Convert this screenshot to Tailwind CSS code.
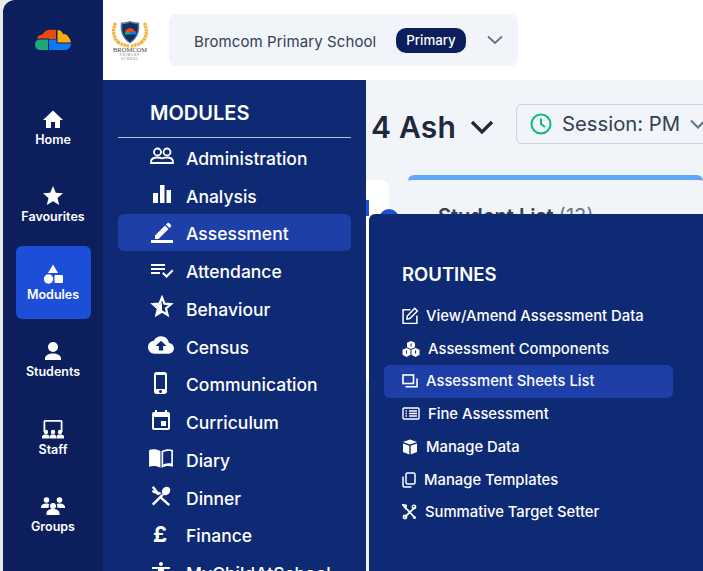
<!DOCTYPE html>
<html lang="en">
<head>
  <meta charset="UTF-8" />
  <title>Bromcom - Modules</title>
  <script src="https://cdn.jsdelivr.net/npm/@tailwindcss/browser@4"></script>
</head>
<body class="bg-[#e8eaee] font-['Inter',sans-serif] overflow-hidden">
<div class="flex w-[703px] h-[571px] overflow-hidden pl-[3px]">

  <!-- Left rail -->
  <aside class="w-[100px] shrink-0 bg-[#0c1f5c] rounded-tl-xl flex flex-col items-center text-white text-[12.5px] font-semibold">
    <div class="h-20 flex items-center justify-center w-full">
      <svg class="w-9 h-[22px]" viewBox="0 0 36 22">
        <path d="M0 15.500C0 12.500 2 10.500 5 10.500H13V21H5C2 21 0 18.500 0 15.500Z" fill="#1fa67a"/>
        <path d="M2 9.500C3 6.500 5.500 5.500 7.500 5.500C9 2.500 12 .8 15.500 .8H21V10H14V9.500Z" fill="#ea4a0c"/>
        <path d="M14 10.500H21.500V14.500H27.500V21H14Z M22 14.500H36C36 18.500 33.500 21 30 21H27.500V14.500Z" fill="#0b7cf2"/>
        <path d="M22.500 1C25.500 1 27.500 3 28 5C31 4.700 33 6.500 34.500 9.500C35.500 11 35.800 12.500 35.800 13.500H22.500Z" fill="#fbab05"/>
      </svg>
    </div>
    <nav class="w-full flex flex-col items-center pt-[10px]">
      <a class="h-[77.500px] w-full flex flex-col items-center justify-center">
        <svg class="w-6 h-6" viewBox="0 0 24 24" fill="currentColor"><path d="M10 21v-6h4v6h5v-8h3L12 3.500 2 13h3v8z"/></svg>
        <span>Home</span>
      </a>
      <a class="h-[76.500px] w-full flex flex-col items-center justify-center">
        <svg class="w-6 h-6" viewBox="0 0 24 24" fill="currentColor"><path d="M12 17.270L18.180 21l-1.640-7.030L22 9.240l-7.190-.61L12 2 9.190 8.630 2 9.240l5.460 4.730L5.820 21z"/></svg>
        <span>Favourites</span>
      </a>
      <a class="h-[73px] mt-[2px] mb-[3px] w-[75px] bg-[#1d4ed8] rounded-md flex flex-col items-center justify-center pt-[1px]">
        <svg class="w-6 h-6" viewBox="0 0 24 24" fill="currentColor"><path d="M12 2.500l5 8.500H7z"/><circle cx="7.500" cy="17" r="4.700"/><rect x="13.500" y="13" width="8.500" height="8" rx="1"/></svg>
        <span>Modules</span>
      </a>
      <a class="h-[77.500px] w-full flex flex-col items-center justify-center">
        <svg class="w-6 h-6" viewBox="0 0 24 24" fill="currentColor"><circle cx="12" cy="8" r="5"/><path d="M4 21v-1.500C4 16 8 14.500 12 14.500s8 1.500 8 5V21z"/></svg>
        <span>Students</span>
      </a>
      <a class="h-[77.500px] w-full flex flex-col items-center justify-center">
        <svg class="w-6 h-6" viewBox="0 0 24 24" fill="currentColor"><path d="M2.500 15V4.500A1.500 1.500 0 0 1 4 3h16a1.500 1.500 0 0 1 1.500 1.500V15h-1.800V4.800H4.300V15z"/><circle cx="5" cy="15" r="2.200"/><circle cx="12" cy="15" r="2.200"/><circle cx="19" cy="15" r="2.200"/><path d="M1 21.500v-2C1 18 3 17.500 5 17.500s3 .5 3.300 2v2zM8.700 21.500v-2c.3-1.500 1.300-2 3.300-2s3 .5 3.300 2v2zM15.700 21.500v-2c.3-1.500 1.300-2 3.300-2s4 .5 4 2v2z"/></svg>
        <span>Staff</span>
      </a>
      <a class="h-[77.500px] w-full flex flex-col items-center justify-center">
        <svg class="w-6 h-6" viewBox="0 0 24 24" fill="currentColor"><circle cx="5.500" cy="6" r="2.800"/><circle cx="18.500" cy="6" r="2.800"/><circle cx="12" cy="12" r="3"/><path d="M0 14v-1c0-2 2.500-3.500 5.500-3.500 1.500 0 2.300.3 2.800.7C7.700 11 7.500 12 8 13.500 6 14 4.500 14 4 14zM24 14v-1c0-2-2.500-3.500-5.500-3.500-1.500 0-2.300.3-2.800.7.600.8.800 1.800.3 3.300 2 .5 3.500.5 4 .5zM5.500 21v-2c0-2.500 3-4 6.500-4s6.500 1.500 6.500 4v2z"/></svg>
        <span>Groups</span>
      </a>
    </nav>
  </aside>

  <div class="flex-1 flex flex-col min-w-0">
    <!-- Header -->
    <header class="h-20 shrink-0 bg-white flex items-center pl-[9px]">
      <svg class="w-9 h-10 shrink-0 mt-[1px]" viewBox="0 0 36 40">
        <path d="M3.500 2c-3 7-2.500 14 2.500 19M32.500 2c3 7 2.500 14-2.500 19M6 21c3 2.500 7 3.500 11 4M30 21c-3 2.500-7 3.500-11 4" fill="none" stroke="#f2b33d" stroke-width="3.400" stroke-dasharray="2.500 .6"/>
        <path d="M18 0c3 1.500 7 1.500 9 1.500 1 7 0 15-9 21C9 16.500 8 8.500 9 1.500c2 0 6 0 9-1.500z" fill="#5a7394"/>
        <path d="M18 1.500c3 1 5 1.500 7.500 1.500.8 6-.5 13-7.500 18C11 16 9.700 9 10.500 3c2.500 0 4.500-.5 7.500-1.500z" fill="#12305e"/>
        <path d="M13 11c1-3 3-4 5-4s3 1 4 2l2 2v2H13z" fill="#ea4a0c"/>
        <rect x="13" y="11" width="5" height="2.500" fill="#1fa67a"/><rect x="18" y="11" width="6" height="2.500" fill="#0b7cf2"/>
        <text x="18" y="30.500" text-anchor="middle" font-family="Liberation Serif" font-size="6.500" fill="#444">BROMCOM</text>
        <text x="18" y="35" text-anchor="middle" font-family="Liberation Serif" font-size="3" letter-spacing="1" fill="#666">PRIMARY</text>
        <text x="18" y="39" text-anchor="middle" font-family="Liberation Serif" font-size="3" letter-spacing="1" fill="#666">SCHOOL</text>
      </svg>
      <div class="ml-[21px] w-[349px] h-[52px] bg-[#f1f4f9] rounded-lg flex items-center pl-[25px] text-[#334155]">
        <span class="text-[15px] tracking-[.1px] mt-[5px] w-[202px]">Bromcom Primary School</span>
        <span class="w-[70px] h-[25px] rounded-[10px] bg-[#0c1f5c] text-white text-[13.300px] font-medium flex items-center justify-center mt-[1px]">Primary</span>
        <svg class="w-[18px] h-[18px] ml-[20px] text-[#64748b]" viewBox="0 0 18 18" fill="none" stroke="currentColor" stroke-width="1.800"><path d="M2 5.500L9 12l7-6.500"/></svg>
      </div>
    </header>

    <div class="flex-1 flex min-h-0">
      <!-- Modules menu -->
      <section class="w-[263px] shrink-0 bg-[#0f2a75] text-white overflow-hidden">
        <h2 class="h-[57px] pl-[47px] pt-[20px] text-[20px] leading-[26px] font-semibold">MODULES</h2>
        <div class="mx-[15px] w-[233px] border-t border-white/70"></div>
        <ul class="px-[15px] text-[17.500px] leading-[24px] font-medium">
          <li class="h-[37.750px] pt-[4px] flex items-center">
            <span class="w-[68px] pl-[32px]"><svg class="w-[24px] h-[24px] -mt-[5px]" viewBox="0 0 24 24" fill="none" stroke="currentColor" stroke-width="1.800"><circle cx="7.500" cy="8" r="3.500"/><circle cx="17" cy="8" r="3.500"/><path d="M1 19v-1c0-3 3-4.500 6.500-4.500 2 0 3.500.4 4.500 1 1-.6 2.500-1 5-1 3.500 0 6 1.500 6 4.500v1z"/></svg></span>
            Administration
          </li>
          <li class="h-[37.750px] pt-[4px] flex items-center">
            <span class="w-[68px] pl-[32px]"><svg class="w-[24px] h-[24px] -mt-[5px]" viewBox="0 0 24 24" fill="currentColor"><rect x="3" y="11" width="5" height="10"/><rect x="10" y="3" width="4.500" height="18"/><rect x="16.500" y="8" width="4.500" height="13"/></svg></span>
            Analysis
          </li>
          <li class="h-[37.750px] pt-[4px] flex items-center bg-[#1f3fa8] rounded-md">
            <span class="w-[68px] pl-[32px]"><svg class="w-[24px] h-[24px] -mt-[5px]" viewBox="0 0 24 24" fill="currentColor"><path d="M5 15.500V19h3.500L18.500 9 15 5.500zM21 6.500c.4-.4.4-1 0-1.400l-2.100-2.100c-.4-.4-1-.4-1.400 0L16 4.500 19.500 8z"/><rect x="1" y="20" width="22" height="3"/></svg></span>
            Assessment
          </li>
          <li class="h-[37.750px] pt-[4px] flex items-center">
            <span class="w-[68px] pl-[32px]"><svg class="w-[24px] h-[24px] -mt-[5px]" viewBox="0 0 24 24" fill="currentColor"><path d="M15 10H1v2h14zM15 6H1v2h14zM1 16h9v-2H1zM22 11.500l1.500 1.500-7 7-4.500-4.500L13.500 14l3 3z"/></svg></span>
            Attendance
          </li>
          <li class="h-[37.750px] pt-[4px] flex items-center">
            <span class="w-[68px] pl-[32px]"><svg class="w-[24px] h-[24px] -mt-[5px]" viewBox="0 0 24 24" fill="none" stroke="currentColor" stroke-width="2.200"><path d="M12 2.500l2.500 6.200 6.500.4-5 4.300 1.600 6.600L12 16.500 6.400 20 8 13.400 3 9.100l6.500-.4z"/><path d="M12 7v9L7.500 18.500 9 13l-3-3 4.500-.5z" fill="currentColor" stroke="none"/></svg></span>
            Behaviour
          </li>
          <li class="h-[37.750px] pt-[4px] flex items-center">
            <span class="w-[68px] pl-[30px]"><svg class="w-[26px] h-[26px] -mt-[6px]" viewBox="0 0 24 24" fill="currentColor"><path d="M19.350 10.040C18.670 6.590 15.640 4 12 4 9.110 4 6.600 5.640 5.350 8.040 2.340 8.360 0 10.910 0 14c0 3.310 2.690 6 6 6h13c2.760 0 5-2.240 5-5 0-2.640-2.050-4.780-4.650-4.960zM14 13v4h-4v-4H7l5-5 5 5h-3z"/></svg></span>
            Census
          </li>
          <li class="h-[37.750px] pt-[4px] flex items-center">
            <span class="w-[68px] pl-[31px]"><svg class="w-[24px] h-[24px] -mt-[5px]" viewBox="0 0 24 24" fill="currentColor"><path d="M15.500 1h-8C6.120 1 5 2.120 5 3.500v17C5 21.880 6.120 23 7.500 23h8c1.380 0 2.500-1.120 2.500-2.500v-17C18 2.120 16.880 1 15.500 1zm-4 21c-.83 0-1.500-.67-1.500-1.500s.67-1.500 1.500-1.500 1.500.67 1.500 1.500-.67 1.500-1.500 1.500zm4.500-4H7V4h9v14z"/></svg></span>
            Communication
          </li>
          <li class="h-[37.750px] pt-[4px] flex items-center">
            <span class="w-[68px] pl-[31px]"><svg class="w-[24px] h-[24px] -mt-[5px]" viewBox="0 0 24 24" fill="currentColor"><path d="M17 12h-5v5h5v-5zM16 1v2H8V1H6v2H5c-1.110 0-1.990.9-1.990 2L3 19c0 1.100.89 2 2 2h14c1.100 0 2-.9 2-2V5c0-1.100-.9-2-2-2h-1V1h-2zm3 18H5V8h14v11z"/></svg></span>
            Curriculum
          </li>
          <li class="h-[37.750px] pt-[4px] flex items-center">
            <span class="w-[68px] pl-[30px]"><svg class="w-[26px] h-[26px] -mt-[6px]" viewBox="0 0 24 24" fill="currentColor"><path d="M1 4.500C4 3.500 8 3.500 11.500 5.500V21C8 19 4 19 1 20z"/><path d="M12.500 5.500C16 3.500 20 3.500 23 4.500V20C20 19 16 19 12.500 21zM14 6.500v11.500c2.500-1 5-1.300 7.500-.9V5.800C19 5.300 16.500 5.500 14 6.500z" fill-rule="evenodd"/></svg></span>
            Diary
          </li>
          <li class="h-[37.750px] pt-[4px] flex items-center">
            <span class="w-[68px] pl-[32px]"><svg class="w-[22px] h-[22px] -mt-[6px]" viewBox="0 0 24 24" fill="none" stroke="currentColor" stroke-width="2.600"><path d="M3 21.500L14 10.500"/><path d="M3 2l6 7.500 2.500-1M2.500 6.500L9 9.500M11 13l10 9"/><ellipse cx="17.500" cy="6.500" rx="4.200" ry="5" transform="rotate(45 17.500 6.500)" fill="currentColor" stroke="none"/></svg></span>
            Dinner
          </li>
          <li class="h-[37.750px] pt-[4px] flex items-center">
            <span class="w-[68px] pl-[35px] text-[22px] font-bold leading-none -mt-[4px]">£</span>
            Finance
          </li>
          <li class="h-[37.750px] pt-[4px] flex items-center">
            <span class="w-[68px] pl-[31px]"><svg class="w-[24px] h-[24px] -mt-[5px]" viewBox="0 0 24 24" fill="currentColor"><path d="M12 2c1.100 0 2 .9 2 2s-.9 2-2 2-2-.9-2-2 .9-2 2-2zm9 7h-6v13h-2v-6h-2v6H9V9H3V7h18v2z"/></svg></span>
            MyChildAtSchool
          </li>
        </ul>
      </section>

      <!-- Page behind the menus -->
      <main class="relative flex-1 bg-[#f1f4f9] min-w-0 overflow-hidden">
        <div class="flex items-center h-[94px] pl-[5px] text-[#1e293b]">
          <h1 class="text-[30px] font-semibold tracking-[.2px] whitespace-nowrap">4 Ash</h1>
          <svg class="w-[26px] h-[26px] ml-[13px] shrink-0" viewBox="0 0 26 26" fill="none" stroke="currentColor" stroke-width="3.200"><path d="M3 8l10 10 10-10"/></svg>
          <div class="ml-[21px] -mt-[6px] shrink-0 w-[230px] h-[40px] bg-[#f1f4f9] border border-[#cbd5e1] rounded-md flex items-center pl-[13px] text-[20.300px] text-[#334155] whitespace-nowrap">
            <svg class="w-[22px] h-[22px] mr-[10px]" viewBox="0 0 22 22" fill="none" stroke="#10b981" stroke-width="2"><circle cx="11" cy="11" r="9.500"/><path d="M11 5.500V11l4 3"/></svg>
            Session: PM
            <svg class="w-[16px] h-[16px] ml-[10px] text-[#64748b]" viewBox="0 0 16 16" fill="none" stroke="currentColor" stroke-width="2"><path d="M1 4.500L8 11.500l7-7"/></svg>
          </div>
        </div>
        <div class="flex h-[200px] pt-[1px]">
          <div class="w-[23px] h-[200px] mt-[5px] bg-white rounded-r-lg"></div>
          <div class="ml-[19px] flex-1 h-[200px] border-t-[5px] border-[#60a5fa] rounded-t-md pl-[30px] pt-[21px] text-[#334155] text-[20px] font-semibold whitespace-nowrap">
            Student List <span class="font-normal text-[#64748b]">(13)</span>
          </div>
        </div>
        <span class="absolute left-0 top-[120px] w-[3px] h-[16px] bg-[#1d4ed8]"></span>
        <span class="absolute left-[13px] top-[129px] w-[20px] h-[20px] rounded-full bg-[#1d4ed8]"></span>

        <!-- Routines flyout -->
        <section class="absolute left-[3px] right-0 top-[134px] bottom-0 bg-[#0f2a75] rounded-tl-md text-white">
          <h3 class="pl-[33px] pt-[47px] h-[85.500px] text-[18.500px] leading-[26px] font-semibold">ROUTINES</h3>
          <ul class="ml-[15px] w-[289px] text-[14.800px] leading-[20px] font-medium">
            <li class="h-[32.600px] flex items-center">
              <svg class="w-[17px] h-[17px] ml-[18px] mr-[7px]" viewBox="0 0 16 16" fill="none" stroke="currentColor" stroke-width="1.400"><path d="M8 2.500H1v13h13V8"/><path d="M5 8.500L12 1.200l2.500 2.500-7.200 7.200-2.600.4z"/></svg>
              View/Amend Assessment Data
            </li>
            <li class="h-[32.600px] pt-[2px] flex items-center">
              <svg class="w-[18px] h-[16px] ml-[18px] mr-[8px]" viewBox="0 0 18 16" fill="currentColor"><path d="M9 0l4 1.700v4.600L9 8 5 6.300V1.700zM4.500 7l4 1.700v5L4.500 16 .5 13.700v-5zM13.500 7l4 1.700v5L13.500 16l-4-2.300v-5z"/><path d="M9 2.500v3M4.500 9.500v3M13.500 9.500v3" stroke="#0f2a75" stroke-width="1"/></svg>
              Assessment Components
            </li>
            <li class="h-[33.500px] flex items-center bg-[#1f3fa8] rounded-md">
              <svg class="w-[16px] h-[16px] ml-[18px] mr-[8px]" viewBox="0 0 16 16" fill="none" stroke="currentColor" stroke-width="1.600"><rect x="1" y="2" width="10.500" height="8.500"/><path d="M3.500 13.800h11.500V5.500"/></svg>
              Assessment Sheets List
            </li>
            <li class="h-[32.600px] flex items-center">
              <svg class="w-[18px] h-[16px] ml-[18px] mr-[8px]" viewBox="0 0 18 16" fill="none" stroke="currentColor" stroke-width="1.400"><rect x="1" y="2" width="16" height="11" rx="1"/><path d="M3.500 5h1.500M7 5h8M3.500 7.500h1.500M7 7.500h8M3.500 10h1.500M7 10h8"/></svg>
              Fine Assessment
            </li>
            <li class="h-[32.600px] flex items-center">
              <svg class="w-[16px] h-[16px] ml-[18px] mr-[8px]" viewBox="0 0 16 16" fill="currentColor"><path d="M8 .5l7 2.500L8 5.500 1 3zM1 4.500l6.300 2.300V15.500L1 13zM8.700 6.800L15 4.500V13l-6.300 2.500z"/></svg>
              Manage Data
            </li>
            <li class="h-[32.600px] flex items-center">
              <svg class="w-[14px] h-[16px] ml-[18px] mr-[8px]" viewBox="0 0 14 16" fill="none" stroke="currentColor" stroke-width="1.500"><rect x="4" y="1" width="9" height="11" rx="1.500"/><path d="M1 4.500V13.500c0 .8.700 1.500 1.500 1.500H9.500"/></svg>
              Manage Templates
            </li>
            <li class="h-[32.600px] flex items-center">
              <svg class="w-[15px] h-[16px] ml-[18px] mr-[8px]" viewBox="0 0 15 16" fill="none" stroke="currentColor" stroke-width="1.800"><path d="M2 2l11 12M13 3L2.500 13.500"/><circle cx="3" cy="13" r="1.800" stroke-width="1.200"/><circle cx="12" cy="3" r="1.800" stroke-width="1.200"/><circle cx="12.500" cy="13.500" r="1.500" fill="currentColor" stroke="none"/><path d="M1 1l3 .5-.5 2.500z" fill="currentColor"/></svg>
              Summative Target Setter
            </li>
          </ul>
        </section>
      </main>
    </div>
  </div>
</div>
</body>
</html>
